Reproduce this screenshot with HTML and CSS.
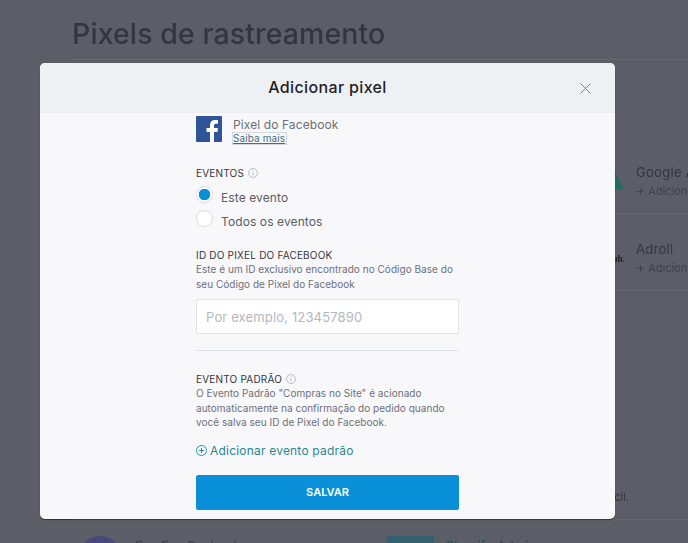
FILE: index.html
```html
<!DOCTYPE html>
<html>
<head>
    <title>Pixels de rastreamento</title>
    <link rel="stylesheet" href="styles.css">
</head>
<body>
    <main class="page">
        <h1 class="page-title">Pixels de rastreamento</h1>
        <section class="pixel-list">
            <div class="pixel-row">
                <svg class="pixel-icon" width="46" height="26" viewBox="0 0 46 26"><polygon points="22,0 33,25 10,25" fill="#1c6f5c"/></svg>
                <div class="pixel-info">
                    <div class="pixel-name">Google Analytics</div>
                    <div class="pixel-add"><span class="plus">+</span> Adicionar</div>
                </div>
            </div>
            <div class="pixel-row">
                <span class="pixel-icon adroll-mark">ılı.</span>
                <div class="pixel-info">
                    <div class="pixel-name">Adroll</div>
                    <div class="pixel-add"><span class="plus">+</span> Adicionar</div>
                </div>
            </div>
        </section>
        <div class="page-note">Fácil.</div>
        <section class="apps">
            <div class="app">
                <span class="app-round"></span>
                <span class="app-name">Fun Fun Payload</span>
            </div>
            <div class="app">
                <span class="app-square"></span>
                <span class="app-name">Shopify Admin</span>
            </div>
        </section>
    </main>

    <div class="overlay">
        <div class="modal">
            <header class="modal-header">
                <h2>Adicionar pixel</h2>
                <button class="close-button" aria-label="Fechar">
                    <svg width="11" height="11" viewBox="0 0 11 11"><path d="M.5.5l10 10M10.500.5l-10 10" stroke="#7d828a" stroke-width="1" fill="none"/></svg>
                </button>
            </header>
            <div class="modal-body">
                <div class="provider">
                    <svg class="provider-logo" width="26" height="26" viewBox="0 0 26 26">
                        <rect width="26" height="26" rx="1" fill="#2f5597"/>
                        <path d="M18 26V16h3.400l.5-3.900H18V9.600c0-1.100.4-1.900 2-1.900h2V4.200c-.4 0-1.600-.2-3-.2-3 0-5 1.800-5 5.100v3H10.500V16H14v10z" fill="#fff"/>
                    </svg>
                    <div>
                        <div class="provider-name">Pixel do Facebook</div>
                        <a class="provider-link" href="#">Saiba mais</a>
                    </div>
                </div>

                <div class="label events-label">EVENTOS
                    <svg class="info" width="10" height="10" viewBox="0 0 10 10"><circle cx="5" cy="5" r="4.500" fill="none" stroke="#b9bdc4"/><path d="M5 4.400v3M5 2.500v1" stroke="#b9bdc4"/></svg>
                </div>
                <div class="radio-group">
                    <label class="radio-row"><span class="radio radio-on"></span>Este evento</label>
                    <label class="radio-row"><span class="radio"></span>Todos os eventos</label>
                </div>

                <div class="label pixel-id-label">ID DO PIXEL DO FACEBOOK</div>
                <p class="help">Este é um ID exclusivo encontrado no Código Base do seu Código de Pixel do Facebook</p>
                <input class="text-input" type="text" placeholder="Por exemplo, 123457890">
                <hr class="divider">

                <div class="label">EVENTO PADRÃO
                    <svg class="info" width="10" height="10" viewBox="0 0 10 10"><circle cx="5" cy="5" r="4.500" fill="none" stroke="#b9bdc4"/><path d="M5 4.400v3M5 2.500v1" stroke="#b9bdc4"/></svg>
                </div>
                <p class="help">O Evento Padrão "Compras no Site" é acionado automaticamente na confirmação do pedido quando você salva seu ID de Pixel do Facebook.</p>
                <a class="add-event" href="#">
                    <svg width="11" height="11" viewBox="0 0 11 11"><circle cx="5.500" cy="5.500" r="5" fill="none" stroke="#2d8f97"/><path d="M5.500 2.800v5.400M2.800 5.500h5.400" stroke="#2d8f97"/></svg>
                    Adicionar evento padrão
                </a>
                <button class="save-button" type="button">SALVAR</button>
            </div>
        </div>
    </div>
</body>
</html>
```
FILE: styles.css
```css
* {
    box-sizing: border-box;
}
html, body {
    margin: 0;
    height: 100%;
    overflow: hidden;
}
body {
    background-color: #5b5e66;
    font-family: Inter, "Liberation Sans", sans-serif;
    color: #3d4148;
}
.page {
    height: 543px;
    padding: 17px 0 0 72px;
    overflow: hidden;
    filter: blur(0.4px);
}
.page-title {
    margin: 0;
    height: 43px;
    font-size: 28.5px;
    line-height: 34px;
    font-weight: 500;
    letter-spacing: 0.1px;
    color: #33363f;
    border-bottom: 1px solid #666971;
}
.pixel-list {
    margin-left: 518px;
    padding-top: 77px;
}
.pixel-row {
    display: flex;
    height: 77px;
    align-items: flex-start;
    border-bottom: 1px solid #666971;
    padding-top: 27px;
}
.pixel-icon {
    width: 46px;
    flex: none;
    color: #1b1d22;
    font-size: 9px;
    font-weight: 700;
}
.adroll-mark {
    padding-left: 25px;
    padding-top: 12px;
    white-space: nowrap;
    overflow: hidden;
}
.pixel-info {
    overflow: hidden;
}
.pixel-name {
    font-size: 13px;
    line-height: 17px;
    letter-spacing: 0.3px;
    color: #33363f;
    white-space: nowrap;
}
.pixel-add {
    font-size: 11px;
    line-height: 17px;
    color: #3f434b;
    white-space: nowrap;
}
.plus {
    font-size: 14px;
}
.page-note {
    margin-top: 199px;
    text-align: right;
    padding-right: 59px;
    font-size: 11px;
    line-height: 14px;
    color: #33363f;
}
.apps {
    display: flex;
    margin-top: 15px;
    padding-top: 16px;
    border-top: 1px solid #666971;
}
.app {
    display: flex;
    flex: none;
    gap: 12px;
    width: 315px;
}
.app-round {
    width: 40px;
    height: 40px;
    border-radius: 50%;
    margin: 0 3px 0 8px;
    background-color: #48487a;
}
.app-square {
    width: 47px;
    height: 40px;
    background-color: #33606f;
}
.app-name {
    font-size: 13px;
    line-height: 14px;
    color: #1f4a55;
    margin-top: 3px;
}
.overlay {
    position: absolute;
    top: 0;
    left: 0;
    width: 688px;
    height: 543px;
}
.modal {
    position: absolute;
    top: 63px;
    left: 40px;
    width: 575px;
    height: 456px;
    background-color: #f8f8fb;
    border-radius: 5px;
    overflow: hidden;
    box-shadow: 0 1px 1px rgba(0, 0, 0, 0.5);
}
.modal-header {
    display: flex;
    align-items: center;
    justify-content: center;
    position: relative;
    height: 50px;
    background-color: #eef1f4;
    border-bottom: 2px solid #ebedf0;
}
.modal-header h2 {
    margin: 0;
    font-size: 16px;
    font-weight: 500;
    letter-spacing: 0.35px;
    color: #1f2126;
}
.close-button {
    position: absolute;
    top: 20px;
    right: 24px;
    padding: 0;
    width: 11px;
    height: 11px;
    border: none;
    background: none;
    line-height: 0;
}
.modal-body {
    width: 263px;
    margin-left: 156px;
    padding-top: 3px;
}
.provider {
    display: flex;
    gap: 11px;
    height: 26px;
}
.provider-logo {
    flex: none;
}
.provider-name {
    font-size: 12px;
    line-height: 13px;
    letter-spacing: 0.1px;
    padding-top: 2px;
    color: #6c7078;
}
.provider-link {
    display: block;
    width: 53px;
    margin-top: 2px;
    font-size: 10px;
    line-height: 11px;
    letter-spacing: 0.1px;
    white-space: nowrap;
    color: #4a6d83;
    outline: 1px solid #d5d8dc;
    text-decoration: underline;
}
.label {
    font-size: 10px;
    line-height: 14px;
    letter-spacing: 0.2px;
    color: #33363c;
}
.events-label {
    margin-top: 24px;
}
.info {
    vertical-align: -1px;
    margin-left: 1px;
}
.radio-group {
    margin-top: 5px;
}
.radio-row {
    display: flex;
    align-items: center;
    gap: 8px;
    height: 24px;
    font-size: 12px;
    letter-spacing: 0.1px;
    color: #585c63;
}
.radio {
    width: 17px;
    height: 17px;
    flex: none;
    margin-top: -6px;
    border-radius: 50%;
    background-color: #fff;
    border: 1px solid #d9dce2;
}
.radio-on {
    background: radial-gradient(circle, #0a90d8 0, #0a90d8 5.5px, #fff 6px);
}
.pixel-id-label {
    margin-top: 15px;
}
.help {
    margin: 0;
    font-size: 10px;
    line-height: 14.5px;
    letter-spacing: 0.03px;
    color: #6c7078;
}
.text-input {
    display: block;
    width: 263px;
    height: 35px;
    margin-top: 8px;
    padding: 0 9px;
    border: 1px solid #dfe2e8;
    border-radius: 2px;
    background-color: #fff;
    font-family: Inter, "Liberation Sans", sans-serif;
    font-size: 13px;
    letter-spacing: 0.15px;
}
.text-input::placeholder {
    color: #b4b7bd;
    opacity: 1;
}
.divider {
    margin: 16px 0 21px;
    border: none;
    border-top: 1px solid #dde1e8;
}
.add-event {
    display: flex;
    align-items: center;
    gap: 3px;
    margin-top: 13px;
    font-size: 12px;
    line-height: 16px;
    letter-spacing: 0.2px;
    color: #2d8590;
    text-decoration: none;
}
.save-button {
    display: block;
    width: 263px;
    height: 35px;
    margin-top: 16px;
    border: none;
    border-radius: 2px;
    background-color: #0a90d8;
    font-family: Inter, "Liberation Sans", sans-serif;
    font-size: 11px;
    font-weight: 600;
    color: #fff;
}
```
